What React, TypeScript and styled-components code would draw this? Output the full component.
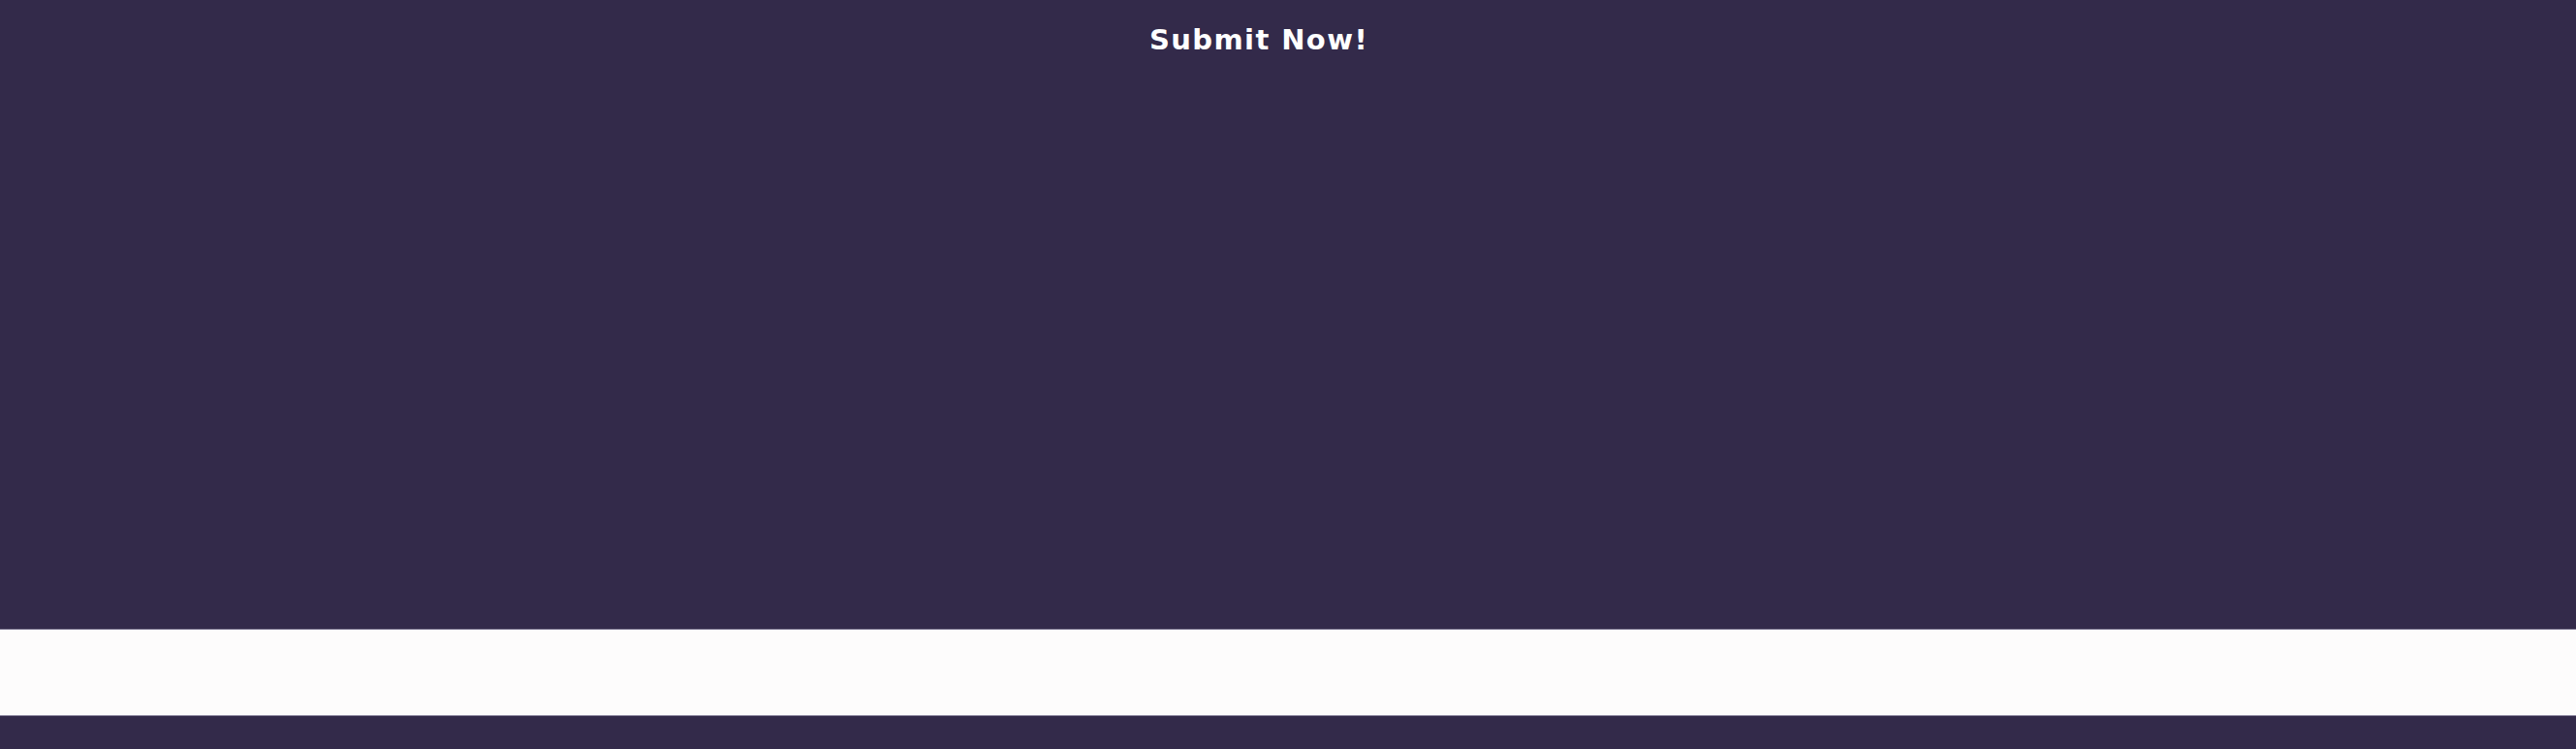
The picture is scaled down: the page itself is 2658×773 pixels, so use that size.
import React from "react";
import styled, { createGlobalStyle } from "styled-components";

const GlobalStyle = createGlobalStyle`
  html, body {
    margin: 0;
    padding: 0;
    background: #332a4a;
  }
  body {
    font-family: "DejaVu Sans", sans-serif;
  }
`;

const Page = styled.div`
  width: 100%;
  height: 773px;
  display: flex;
  flex-direction: column;
  background: #332a4a;
  overflow: hidden;
`;

const Hero = styled.section`
  height: 649px;
  display: flex;
  justify-content: center;
  align-items: flex-start;
  padding-right: 60px;
  box-sizing: border-box;
`;

const SubmitButton = styled.button`
  margin-top: 23px;
  padding: 0;
  background: none;
  border: none;
  color: #ffffff;
  font-family: "DejaVu Sans", sans-serif;
  font-weight: 700;
  font-size: 29px;
  letter-spacing: 1.4px;
  line-height: 36px;
  cursor: pointer;
`;

const Band = styled.div`
  height: 90px;
  background: #fdfcfc;
  border-top: 1px solid #8e88a0;
  border-bottom: 1px solid #8e88a0;
  box-sizing: border-box;
`;

const Footer = styled.div`
  flex: 1;
  background: #332a4a;
`;

export default function App() {
  return (
    <>
      <GlobalStyle />
      <Page>
        <Hero>
          <SubmitButton>Submit Now!</SubmitButton>
        </Hero>
        <Band />
        <Footer />
      </Page>
    </>
  );
}
